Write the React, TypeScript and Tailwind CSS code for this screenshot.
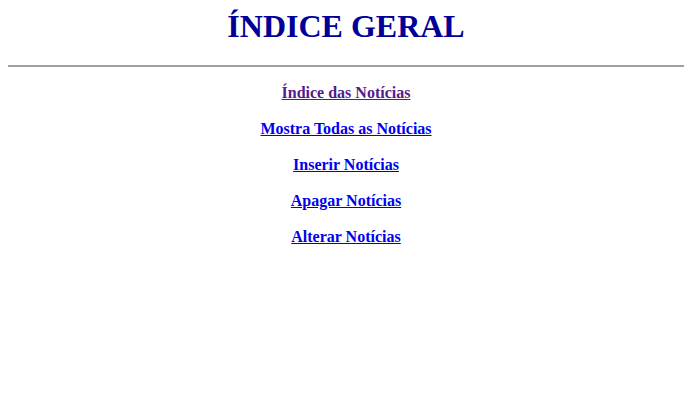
import React from 'react';

const links = [
  { label: 'Índice das Notícias', visited: true },
  { label: 'Mostra Todas as Notícias', visited: false },
  { label: 'Inserir Notícias', visited: false },
  { label: 'Apagar Notícias', visited: false },
  { label: 'Alterar Notícias', visited: false },
];

export default function App() {
  return (
    <div className="min-h-[409px] bg-white px-2 font-['Liberation_Serif',serif]">
      <h1 className="pt-[8px] text-center text-[32px] font-bold leading-[37px] text-[#000099]">
        ÍNDICE GERAL
      </h1>
      <hr className="mt-[20px] border-t-2 border-[#a0a0a0]" />
      <nav className="mt-[17px] flex flex-col items-center gap-[18px]">
        {links.map((l) => (
          <a
            key={l.label}
            href="#"
            className={
              'text-[16px] font-bold leading-[18px] underline ' +
              (l.visited ? 'text-[#551a8b]' : 'text-[#0000ee]')
            }
          >
            {l.label}
          </a>
        ))}
      </nav>
    </div>
  );
}
